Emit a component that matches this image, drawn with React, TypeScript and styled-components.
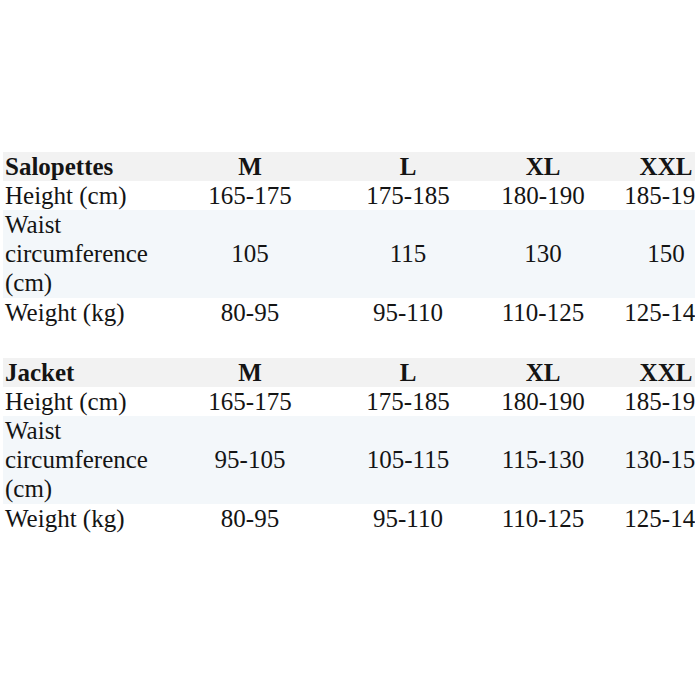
import styled, { createGlobalStyle } from "styled-components";

const GlobalStyle = createGlobalStyle`
    html, body {
        margin: 0;
        padding: 0;
        background: #ffffff;
    }
    body {
        font-family: "Liberation Serif", "Times New Roman", "DejaVu Serif", serif;
        color: #141414;
    }
`;

const Page = styled.div`
    width: 700px;
    height: 700px;
    padding-top: 152px;
    box-sizing: border-box;
    overflow: hidden;
`;

const Frame = styled.div`
    margin-left: 3px;
    width: 692px;
    overflow: hidden;
    display: flex;
    flex-direction: column;
    gap: 31px;
`;

const Table = styled.div`
    width: 719px;
    display: flex;
    flex-direction: column;
`;

const Row = styled.div<{ $bg?: string; $head?: boolean; $tall?: boolean }>`
    display: grid;
    grid-template-columns: 157px 180px 136px 134px 112px;
    align-items: center;
    background: ${(p) => p.$bg || "#ffffff"};
    font-family: "Liberation Serif", "Times New Roman", "DejaVu Serif", serif;
    font-size: 25px;
    line-height: 29px;
    font-weight: ${(p) => (p.$head ? 700 : 400)};
    padding-bottom: ${(p) => (p.$tall ? "1px" : "0")};
`;

const Label = styled.div`
    padding-left: 2px;
    text-align: left;
`;

const Cell = styled.div`
    text-align: center;
    white-space: nowrap;
`;

type sizeRow = {
    label: string;
    values: string[];
    bg?: string;
};

type tableType = {
    title: string;
    rows: sizeRow[];
};

const sizes = ["M", "L", "XL", "XXL"];

const tables: tableType[] = [
    {
        title: "Salopettes",
        rows: [
            { label: "Height (cm)", values: ["165-175", "175-185", "180-190", "185-195"] },
            { label: "Waist circumference (cm)", values: ["105", "115", "130", "150"], bg: "#f3f7fa" },
            { label: "Weight (kg)", values: ["80-95", "95-110", "110-125", "125-140"] },
        ],
    },
    {
        title: "Jacket",
        rows: [
            { label: "Height (cm)", values: ["165-175", "175-185", "180-190", "185-195"] },
            { label: "Waist circumference (cm)", values: ["95-105", "105-115", "115-130", "130-150"], bg: "#f3f7fa" },
            { label: "Weight (kg)", values: ["80-95", "95-110", "110-125", "125-140"] },
        ],
    },
];

function App() {
    return (
        <Page>
            <GlobalStyle />
            <Frame>
                {tables.map((t) => (
                    <Table key={t.title}>
                        <Row $head $bg="#f2f2f2">
                            <Label>{t.title}</Label>
                            {sizes.map((s) => (
                                <Cell key={s}>{s}</Cell>
                            ))}
                        </Row>
                        {t.rows.map((r) => (
                            <Row key={r.label} $bg={r.bg} $tall={!!r.bg}>
                                <Label>{r.label}</Label>
                                {r.values.map((v, i) => (
                                    <Cell key={i}>{v}</Cell>
                                ))}
                            </Row>
                        ))}
                    </Table>
                ))}
            </Frame>
        </Page>
    );
}

export default App;
